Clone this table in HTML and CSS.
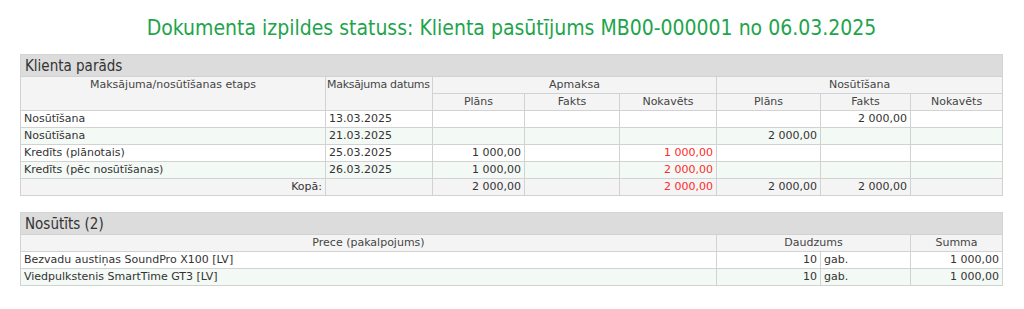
FILE: index.html
```html
<!DOCTYPE html>
<html lang="lv">
<head>
<meta charset="utf-8">
<title>Dokumenta izpildes statuss</title>
<link rel="stylesheet" href="styles.css">
</head>
<body>
<div class="page">
  <h1 class="title">Dokumenta izpildes statuss: Klienta pasūtījums MB00-000001 no 06.03.2025</h1>

  <section class="block">
    <div class="block-head">Klienta parāds</div>
    <table class="grid">
      <colgroup>
        <col class="c-stage"><col class="c-date"><col class="c-a1"><col class="c-a2"><col class="c-a3"><col class="c-n1"><col class="c-n2"><col class="c-n3">
      </colgroup>
      <thead>
        <tr>
          <th rowspan="2" class="top">Maksājuma/nosūtīšanas etaps</th>
          <th rowspan="2" class="top left">Maksājuma datums</th>
          <th colspan="3">Apmaksa</th>
          <th colspan="3">Nosūtīšana</th>
        </tr>
        <tr>
          <th>Plāns</th><th>Fakts</th><th>Nokavēts</th>
          <th>Plāns</th><th>Fakts</th><th>Nokavēts</th>
        </tr>
      </thead>
      <tbody>
        <tr>
          <td>Nosūtīšana</td><td>13.03.2025</td>
          <td class="num"></td><td class="num"></td><td class="num"></td>
          <td class="num"></td><td class="num">2 000,00</td><td class="num"></td>
        </tr>
        <tr class="alt">
          <td>Nosūtīšana</td><td>21.03.2025</td>
          <td class="num"></td><td class="num"></td><td class="num"></td>
          <td class="num">2 000,00</td><td class="num"></td><td class="num"></td>
        </tr>
        <tr>
          <td>Kredīts (plānotais)</td><td>25.03.2025</td>
          <td class="num">1 000,00</td><td class="num"></td><td class="num red">1 000,00</td>
          <td class="num"></td><td class="num"></td><td class="num"></td>
        </tr>
        <tr class="alt">
          <td>Kredīts (pēc nosūtīšanas)</td><td>26.03.2025</td>
          <td class="num">1 000,00</td><td class="num"></td><td class="num red">2 000,00</td>
          <td class="num"></td><td class="num"></td><td class="num"></td>
        </tr>
        <tr class="total">
          <td class="num">Kopā:</td><td></td>
          <td class="num">2 000,00</td><td class="num"></td><td class="num red">2 000,00</td>
          <td class="num">2 000,00</td><td class="num">2 000,00</td><td class="num"></td>
        </tr>
      </tbody>
    </table>
  </section>

  <section class="block">
    <div class="block-head">Nosūtīts (2)</div>
    <table class="grid">
      <colgroup>
        <col class="c-item"><col class="c-n1"><col class="c-n2"><col class="c-n3">
      </colgroup>
      <thead>
        <tr>
          <th>Prece (pakalpojums)</th>
          <th colspan="2">Daudzums</th>
          <th>Summa</th>
        </tr>
      </thead>
      <tbody>
        <tr>
          <td>Bezvadu austiņas SoundPro X100 [LV]</td>
          <td class="num">10</td><td>gab.</td><td class="num">1 000,00</td>
        </tr>
        <tr class="alt">
          <td>Viedpulkstenis SmartTime GT3 [LV]</td>
          <td class="num">10</td><td>gab.</td><td class="num">1 000,00</td>
        </tr>
      </tbody>
    </table>
  </section>
</div>
</body>
</html>
```
FILE: styles.css
```css
html, body {
  margin: 0;
  padding: 0;
  background: #ffffff;
}

body {
  font-family: "DejaVu Sans", sans-serif;
  color: #333333;
}

.page {
  padding: 16px 21px 0 20px;
}

.title {
  margin: 0 0 14px 0;
  text-align: center;
  font-weight: normal;
  font-family: "DejaVu Sans Condensed", "DejaVu Sans", sans-serif;
  font-size: 21px;
  line-height: 24px;
  color: #1ea44c;
}

.block {
  margin-bottom: 16px;
}

.block-head {
  background: #dcdcdc;
  height: 21px;
  line-height: 22px;
  padding: 0 4px;
  font-family: "DejaVu Sans Condensed", "DejaVu Sans", sans-serif;
  font-size: 15px;
  color: #333333;
  border: 1px solid #d4d4d4;
  border-bottom: none;
}

.grid {
  width: 100%;
  border-collapse: collapse;
  table-layout: fixed;
  font-size: 11px;
}

.grid th,
.grid td {
  border: 1px solid #d2d2d2;
  height: 16px;
  line-height: 16px;
  padding: 0 3px;
  white-space: nowrap;
  overflow: hidden;
}

.grid th {
  background: #f4f4f4;
  font-weight: normal;
  text-align: center;
  color: #444444;
}

.grid th.top {
  vertical-align: top;
}

.grid th.left {
  text-align: left;
  padding-left: 1px;
  padding-right: 0;
  letter-spacing: -0.3px;
}

.grid td {
  background: #ffffff;
}

.grid tr.alt td {
  background: #f3f9f4;
}

.grid tr.total td {
  background: #f4f4f4;
}

.num {
  text-align: right;
}

.red {
  color: #ff2a2a;
}

.c-stage { width: 305px; }
.c-date { width: 107px; }
.c-a1 { width: 92px; }
.c-a2 { width: 95px; }
.c-a3 { width: 97px; }
.c-n1 { width: 104px; }
.c-n2 { width: 90px; }
.c-n3 { width: 92px; }
.c-item { width: 696px; }
```
